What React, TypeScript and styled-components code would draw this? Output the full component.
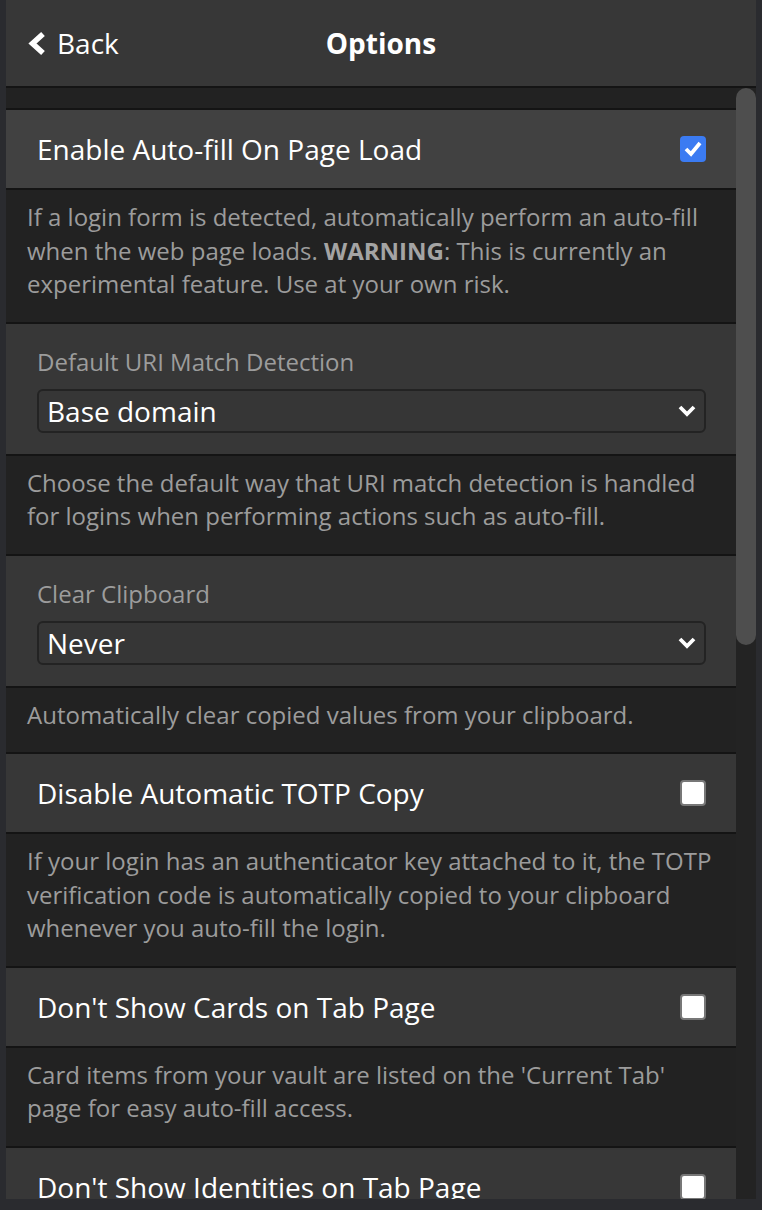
import React from "react";
import styled, { createGlobalStyle } from "styled-components";

const Global = createGlobalStyle`
  html, body { margin: 0; padding: 0; background: #2a2b2f; }
  body { font-family: "Open Sans", "Noto Sans", sans-serif; -webkit-font-smoothing: antialiased; }
  * { box-sizing: border-box; }
`;

const Page = styled.div`
  width: 762px;
  height: 1210px;
  overflow: hidden;
  display: flex;
  padding: 0 6px 11px 6px;
  background: #2a2b2f;
`;

const Popup = styled.div`
  width: 750px;
  height: 1199px;
  display: flex;
  flex-direction: column;
  background: #222222;
  overflow: hidden;
`;

const Header = styled.header`
  height: 88px;
  flex: none;
  display: grid;
  grid-template-columns: 1fr auto 1fr;
  align-items: center;
  background: #373737;
  border-bottom: 2px solid #141414;
  color: #ffffff;
  font-size: 28px;
`;

const BackLink = styled.a`
  display: flex;
  align-items: center;
  gap: 11px;
  margin-left: 21px;
  color: #ffffff;
  text-decoration: none;
  justify-self: start;
`;

const Title = styled.h1`
  margin: 0;
  font-size: 28px;
  font-weight: 700;
`;

const Body = styled.div`
  flex: 1;
  display: flex;
  min-height: 0;
`;

const Content = styled.div`
  flex: 1;
  padding-top: 20px;
  overflow: hidden;
`;

const Track = styled.div`
  width: 20px;
  flex: none;
  background: #232323;
`;

const Thumb = styled.div`
  height: 557px;
  border-radius: 10px;
  background: #4e4e4e;
`;

const Box = styled.section`
  margin-bottom: 0;
`;

const BoxContent = styled.div<{ $hover?: boolean }>`
  background: ${(p) => (p.$hover ? "#414141" : "#373737")};
  border-top: 2px solid #141414;
  border-bottom: 2px solid #141414;
`;

const CheckRow = styled.label`
  height: 78px;
  display: flex;
  align-items: center;
  justify-content: space-between;
  padding: 0 30px 0 31px;
  color: #ffffff;
  font-size: 28px;
`;

const RowLabel = styled.span`
  line-height: 38px;
`;

const Check = styled.span<{ $on?: boolean }>`
  width: 26px;
  height: 26px;
  border-radius: 4px;
  display: flex;
  align-items: center;
  justify-content: center;
  background: ${(p) => (p.$on ? "#3b7bf2" : "#ffffff")};
  border: ${(p) => (p.$on ? "none" : "2px solid #777777")};
`;

const SelectRow = styled.div`
  padding: 21px 30px 21px 31px;
  display: flex;
  flex-direction: column;
  gap: 11px;
`;

const FieldLabel = styled.span`
  color: #9c9c9c;
  font-size: 24px;
  line-height: 33px;
`;

const SelectBox = styled.div`
  height: 44px;
  border: 2px solid #232323;
  border-radius: 6px;
  background: #363636;
  display: flex;
  align-items: center;
  justify-content: space-between;
  padding: 0 8px 0 8px;
  color: #ffffff;
  font-size: 28px;
`;

const Footer = styled.p`
  margin: 0;
  padding: 10px 18px 21px 21px;
  color: #9c9c9c;
  font-size: 24px;
  line-height: 33.5px;
  b { font-weight: 700; color: #a4a4a4; }
`;

const ChevronLeft = () => (
  <svg width="19" height="25" viewBox="0 0 19 25">
    <polyline points="16,3 5.5,12.5 16,22" fill="none" stroke="#ffffff" strokeWidth="5.5" strokeLinejoin="miter" />
  </svg>
);

const ChevronDown = () => (
  <svg width="18" height="12" viewBox="0 0 18 12">
    <polyline points="2,2 9,9 16,2" fill="none" stroke="#ffffff" strokeWidth="3.8" strokeLinejoin="miter" />
  </svg>
);

const Tick = () => (
  <svg width="20" height="18" viewBox="0 0 20 18">
    <polyline points="3,9 8,14 17,3" fill="none" stroke="#ffffff" strokeWidth="3.8" strokeLinejoin="miter" />
  </svg>
);

type Item =
  | { kind: "check"; label: string; on?: boolean; hover?: boolean; desc?: React.ReactNode }
  | { kind: "select"; label: string; value: string; desc?: React.ReactNode };

const items: Item[] = [
  {
    kind: "check",
    label: "Enable Auto-fill On Page Load",
    on: true,
    hover: true,
    desc: (
      <>
        If a login form is detected, automatically perform an auto-fill when the web page loads. <b>WARNING</b>: This
        is currently an experimental feature. Use at your own risk.
      </>
    ),
  },
  {
    kind: "select",
    label: "Default URI Match Detection",
    value: "Base domain",
    desc: "Choose the default way that URI match detection is handled for logins when performing actions such as auto-fill.",
  },
  {
    kind: "select",
    label: "Clear Clipboard",
    value: "Never",
    desc: "Automatically clear copied values from your clipboard.",
  },
  {
    kind: "check",
    label: "Disable Automatic TOTP Copy",
    desc: "If your login has an authenticator key attached to it, the TOTP verification code is automatically copied to your clipboard whenever you auto-fill the login.",
  },
  {
    kind: "check",
    label: "Don't Show Cards on Tab Page",
    desc: "Card items from your vault are listed on the 'Current Tab' page for easy auto-fill access.",
  },
  {
    kind: "check",
    label: "Don't Show Identities on Tab Page",
    desc: "Identity items from your vault are listed on the 'Current Tab' page for easy auto-fill access.",
  },
];

export default function App() {
  return (
    <>
      <Global />
      <Page>
        <Popup>
          <Header>
            <BackLink href="#">
              <ChevronLeft />
              Back
            </BackLink>
            <Title>Options</Title>
            <span />
          </Header>
          <Body>
            <Content>
              {items.map((it) => (
                <Box key={it.label}>
                  <BoxContent $hover={it.kind === "check" && it.hover}>
                    {it.kind === "check" ? (
                      <CheckRow>
                        <RowLabel>{it.label}</RowLabel>
                        <Check $on={it.on}>{it.on && <Tick />}</Check>
                      </CheckRow>
                    ) : (
                      <SelectRow>
                        <FieldLabel>{it.label}</FieldLabel>
                        <SelectBox>
                          <span>{it.value}</span>
                          <ChevronDown />
                        </SelectBox>
                      </SelectRow>
                    )}
                  </BoxContent>
                  {it.desc && <Footer>{it.desc}</Footer>}
                </Box>
              ))}
            </Content>
            <Track>
              <Thumb />
            </Track>
          </Body>
        </Popup>
      </Page>
    </>
  );
}
